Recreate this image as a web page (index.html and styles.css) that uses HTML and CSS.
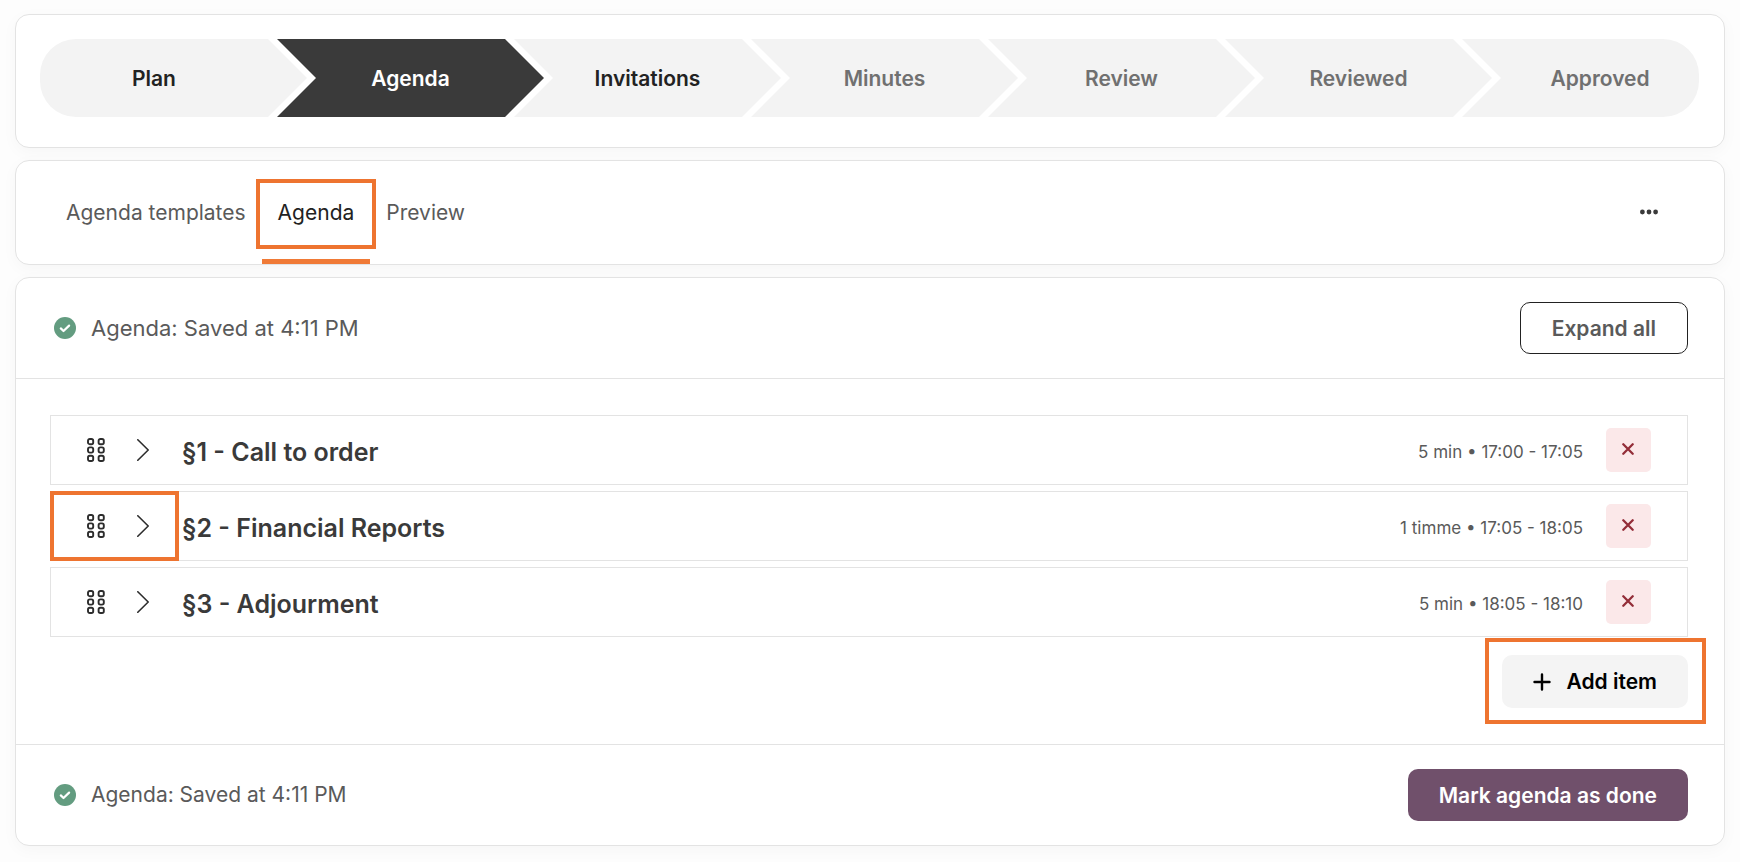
FILE: index.html
```html
<!DOCTYPE html>
<html lang="en">
<head>
    <title>Agenda</title>
    <meta charset="utf-8" />
    <meta name="viewport" content="width=device-width, initial-scale=1" />
    <link rel="stylesheet" href="styles.css">
</head>
<body>
<svg class="sprite" aria-hidden="true">
    <symbol id="i-check" viewBox="0 0 22 22">
        <circle cx="11" cy="11" r="11" fill="#639c80" />
        <path d="M6.8 11.4l2.7 2.6 5.6-5.4" fill="none" stroke="#fff" stroke-width="2.2" stroke-linecap="round" stroke-linejoin="round" />
    </symbol>
    <symbol id="i-grip" viewBox="0 0 18 24">
        <g fill="none" stroke="currentColor" stroke-width="1.9">
            <rect x="1" y="1" width="5.2" height="5.2" rx="1.8" />
            <rect x="11.6" y="1" width="5.2" height="5.2" rx="1.8" />
            <rect x="1" y="9.4" width="5.2" height="5.2" rx="1.8" />
            <rect x="11.6" y="9.4" width="5.2" height="5.2" rx="1.8" />
            <rect x="1" y="17.8" width="5.2" height="5.2" rx="1.8" />
            <rect x="11.6" y="17.8" width="5.2" height="5.2" rx="1.8" />
        </g>
    </symbol>
    <symbol id="i-chevron" viewBox="0 0 12 22">
        <path d="M.8 .8L11.2 11 .8 21.2" fill="none" stroke="currentColor" stroke-width="1.6" stroke-linecap="round" />
    </symbol>
    <symbol id="i-cross" viewBox="0 0 12 12">
        <path d="M1.3 1.3l9.4 9.4M10.7 1.3l-9.4 9.4" fill="none" stroke="currentColor" stroke-width="2.3" stroke-linecap="round" />
    </symbol>
</svg>

<main class="page">
    <nav class="card stepper" aria-label="Meeting steps">
        <ol class="steps">
            <li class="step"><a class="step-link" href="#plan">Plan</a></li>
            <li class="step active"><a class="step-link" href="#agenda">Agenda</a></li>
            <li class="step"><a class="step-link" href="#invitations">Invitations</a></li>
            <li class="step upcoming"><a class="step-link" href="#minutes">Minutes</a></li>
            <li class="step upcoming"><a class="step-link" href="#review">Review</a></li>
            <li class="step upcoming"><a class="step-link" href="#reviewed">Reviewed</a></li>
            <li class="step upcoming"><a class="step-link" href="#approved">Approved</a></li>
        </ol>
    </nav>

    <nav class="card tabs" aria-label="Agenda views">
        <a class="tab" href="#templates">Agenda templates</a>
        <a class="tab current highlight highlight-tab" href="#agenda">Agenda</a>
        <a class="tab" href="#preview">Preview</a>
        <button class="more" type="button" aria-label="More">
            <svg width="18" height="6" viewBox="0 0 18 6" fill="currentColor">
                <circle cx="2.4" cy="3" r="2.4" />
                <circle cx="9" cy="3" r="2.4" />
                <circle cx="15.6" cy="3" r="2.4" />
            </svg>
        </button>
    </nav>

    <section class="card">
        <header class="bar">
            <p class="status status-large"><svg class="check"><use href="#i-check" /></svg>Agenda: Saved at 4:11 PM</p>
            <button class="btn btn-outline" type="button">Expand all</button>
        </header>

        <div class="content">
            <ul class="items">
                <li class="item">
                    <div class="handles">
                        <button class="icon-btn" type="button" aria-label="Move"><svg class="grip"><use href="#i-grip" /></svg></button>
                        <button class="icon-btn" type="button" aria-label="Expand"><svg class="chevron"><use href="#i-chevron" /></svg></button>
                    </div>
                    <h2 class="title">§1 - Call to order</h2>
                    <span class="time">5 min • 17:00 - 17:05</span>
                    <button class="remove" type="button" aria-label="Remove"><svg class="cross"><use href="#i-cross" /></svg></button>
                </li>
                <li class="item">
                    <div class="handles highlight highlight-handles">
                        <button class="icon-btn" type="button" aria-label="Move"><svg class="grip"><use href="#i-grip" /></svg></button>
                        <button class="icon-btn" type="button" aria-label="Expand"><svg class="chevron"><use href="#i-chevron" /></svg></button>
                    </div>
                    <h2 class="title">§2 - Financial Reports</h2>
                    <span class="time">1 timme • 17:05 - 18:05</span>
                    <button class="remove" type="button" aria-label="Remove"><svg class="cross"><use href="#i-cross" /></svg></button>
                </li>
                <li class="item">
                    <div class="handles">
                        <button class="icon-btn" type="button" aria-label="Move"><svg class="grip"><use href="#i-grip" /></svg></button>
                        <button class="icon-btn" type="button" aria-label="Expand"><svg class="chevron"><use href="#i-chevron" /></svg></button>
                    </div>
                    <h2 class="title">§3 - Adjourment</h2>
                    <span class="time">5 min • 18:05 - 18:10</span>
                    <button class="remove" type="button" aria-label="Remove"><svg class="cross"><use href="#i-cross" /></svg></button>
                </li>
            </ul>
            <div class="add highlight highlight-add">
                <button class="btn btn-light" type="button">
                    <svg width="18" height="18" viewBox="0 0 18 18" fill="none" stroke="currentColor" stroke-width="2.4" stroke-linecap="round">
                        <path d="M9 1.5v15M1.5 9h15" />
                    </svg>
                    Add item
                </button>
            </div>
        </div>

        <footer class="bar bar-bottom">
            <p class="status"><svg class="check"><use href="#i-check" /></svg>Agenda: Saved at 4:11 PM</p>
            <button class="btn btn-primary" type="button">Mark agenda as done</button>
        </footer>
    </section>
</main>
</body>
</html>
```
FILE: styles.css
```css
* {
    box-sizing: border-box;
}
body {
    margin: 0;
    background: #fdfdfd;
    color: #5a5a5a;
    font-family: Inter, "Open Sans", sans-serif;
    font-size: 21px;
    line-height: 28px;
}
a {
    color: inherit;
    text-decoration: none;
}
button {
    font: inherit;
    color: inherit;
    border: 0;
    background: none;
    padding: 0;
    cursor: pointer;
}
svg {
    display: block;
    flex: none;
}
ol, ul {
    list-style: none;
    margin: 0;
    padding: 0;
}
.sprite {
    position: absolute;
    width: 0;
    height: 0;
}
.page {
    display: flex;
    flex-direction: column;
    gap: 12px;
    padding: 14px 15px 16px;
}
.card {
    background: #fff;
    border: 1px solid #e3e3e3;
    border-radius: 14px;
    box-shadow: 0 4px 16px rgba(0, 0, 0, 0.03);
}

/* steps */
.stepper {
    padding: 24px 25px 30px 24px;
}
.steps {
    display: flex;
    border-radius: 36px;
    overflow: hidden;
}
.step {
    flex: 1 1 0;
    min-width: 0;
    color: #222;
    font-weight: 600;
}
.step-link {
    display: flex;
    align-items: center;
    justify-content: center;
    height: 78px;
    margin-right: -30px;
    padding-top: 2px;
    background: #f3f3f3;
    clip-path: polygon(0 0, calc(100% - 39px) 0, 100% 50%, calc(100% - 39px) 100%, 0 100%, 39px 50%);
}
.step:first-child .step-link {
    padding-right: 39px;
    clip-path: polygon(0 0, calc(100% - 39px) 0, 100% 50%, calc(100% - 39px) 100%, 0 100%);
}
.step:last-child .step-link {
    margin-right: 0;
    padding-left: 39px;
    clip-path: polygon(0 0, 100% 0, 100% 100%, 0 100%, 39px 50%);
}
.active .step-link {
    background: #3a3a3a;
    color: #fff;
}
.upcoming {
    color: #707070;
}

/* tabs */
.tabs {
    display: flex;
    align-items: stretch;
    padding: 0 62px 0 34px;
}
.tab {
    display: flex;
    align-items: center;
    height: 103px;
    padding: 5px 16px 0;
    border-bottom: 5px solid transparent;
}
.current {
    border-color: #f07a36;
    color: #222;
}
.more {
    display: flex;
    align-items: center;
    margin-left: auto;
    padding: 0 4px 2px;
    color: #3a3a3a;
}

/* orange frames */
.highlight {
    position: relative;
}
.highlight::after {
    content: "";
    position: absolute;
    border: 4px solid #ee7430;
    pointer-events: none;
}
.highlight-tab::after {
    inset: 18px -6px 10px;
}
.highlight-handles::after {
    inset: -1px 3px -1px -1px;
}
.highlight-add::after {
    inset: -17px -18px -16px -17px;
}

.bar {
    display: flex;
    align-items: center;
    justify-content: space-between;
    padding: 24px 36px 24px 38px;
    border-bottom: 1px solid #e3e3e3;
}
.bar-bottom {
    border-top: 1px solid #e3e3e3;
    border-bottom: 0;
}
.status {
    display: flex;
    align-items: center;
    gap: 15px;
    margin: 0;
}
.status-large {
    font-size: 22px;
}
.check {
    width: 22px;
    height: 22px;
}
.btn {
    display: flex;
    align-items: center;
    gap: 13px;
    height: 52px;
    padding: 1px 31px 0;
    border-radius: 10px;
    font-weight: 600;
}
.btn-outline {
    border: 1px solid #222;
}
.btn-light {
    gap: 16px;
    height: 53px;
    background: #f4f4f4;
    color: #000;
}
.btn-primary {
    background: #70506b;
    color: #fff;
}

/* agenda items */
.content {
    padding: 36px 36px 36px 34px;
}
.items {
    display: flex;
    flex-direction: column;
    gap: 6px;
}
.item {
    display: flex;
    align-items: center;
    height: 70px;
    padding-right: 36px;
    border: 1px solid #e3e3e3;
}
.handles {
    display: flex;
    align-items: center;
    align-self: stretch;
    gap: 32px;
    width: 131px;
    padding-left: 36px;
    color: #2c2c2c;
}
.grip {
    width: 18px;
    height: 24px;
}
.chevron {
    width: 12px;
    height: 22px;
}
.title {
    flex: 1;
    margin: 0;
    padding-top: 3px;
    color: #3a3a3a;
    font-size: 25px;
    font-weight: 600;
}
.time {
    padding-top: 4px;
    font-size: 17px;
}
.remove {
    display: flex;
    align-items: center;
    justify-content: center;
    width: 45px;
    height: 44px;
    margin-left: 23px;
    padding: 0 1px 2px 0;
    border-radius: 5px;
    background: #fbe8e9;
    color: #932d38;
}
.cross {
    width: 12px;
    height: 12px;
}
.add {
    width: fit-content;
    margin: 18px 0 0 auto;
}
```
